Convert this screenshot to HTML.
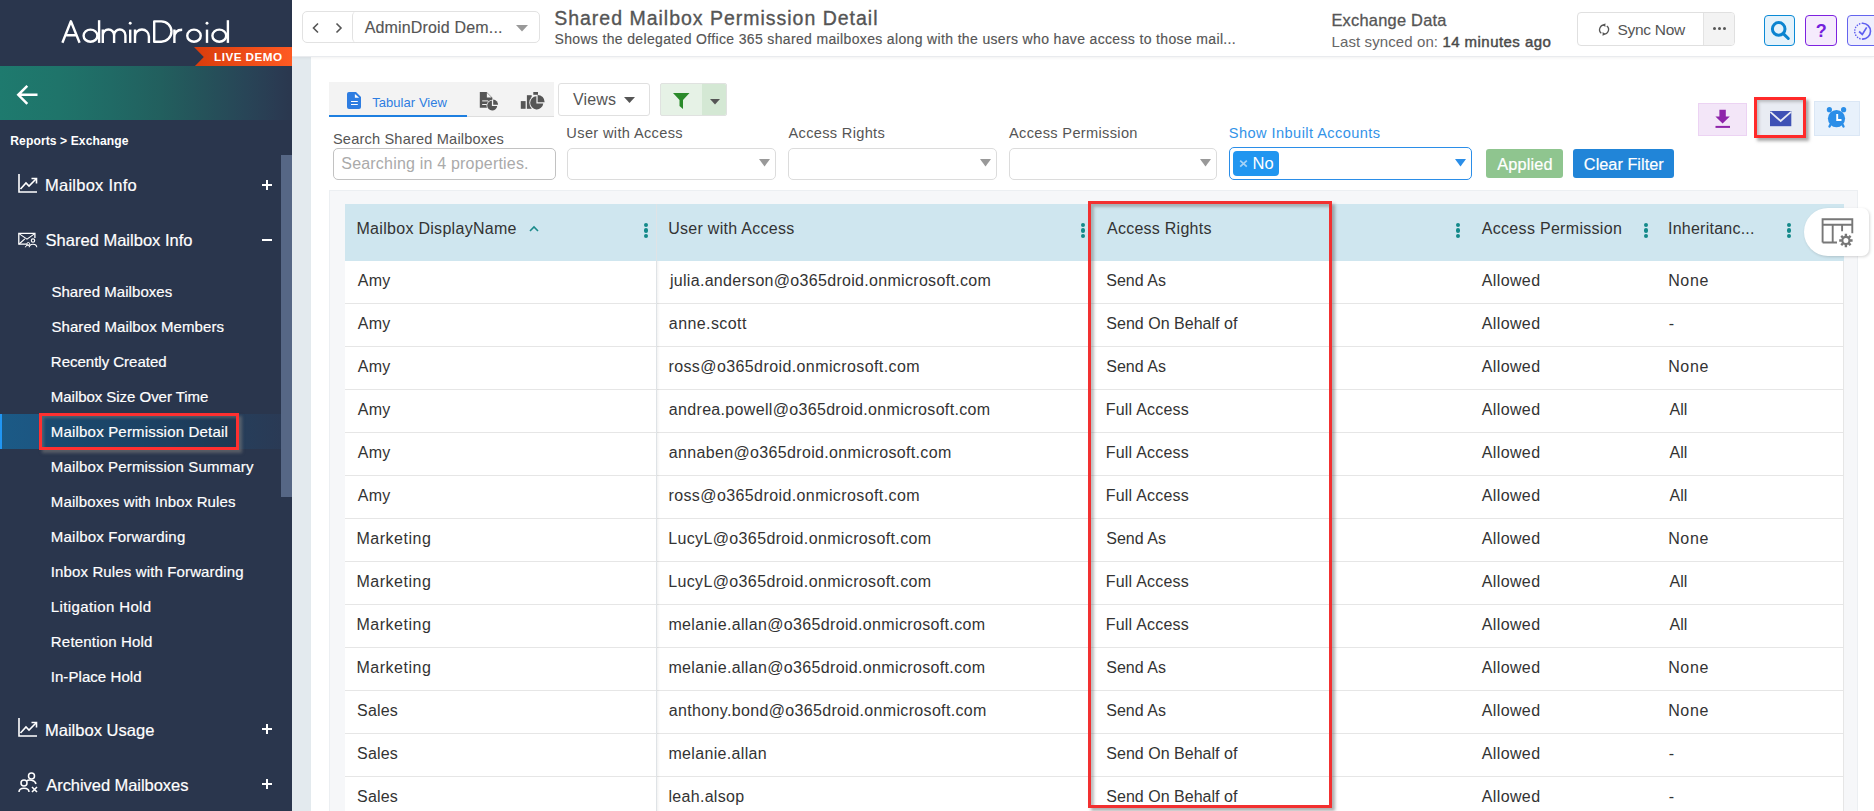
<!DOCTYPE html><html><head><meta charset="utf-8"><style>
html,body{margin:0;padding:0;width:1874px;height:811px;overflow:hidden;background:#fff;font-family:"Liberation Sans",sans-serif;}
.t{position:absolute;white-space:nowrap;}
.b{position:absolute;box-sizing:border-box;}
svg{position:absolute;overflow:visible;}
.sb{-webkit-text-stroke:0.25px #fff;}
</style></head><body>
<div class="b" style="left:0px;top:0px;width:292px;height:811px;background:#2a364d"></div>
<svg style="left:0;top:0" width="292" height="60" viewBox="0 0 292 60"><g fill="none" stroke="#fff" stroke-width="2.4" stroke-linejoin="round">
<path d="M62.4 42.8L70.9 21.3L79.6 42.8M65.6 35.2H76.4"/>
<ellipse cx="90.5" cy="35.7" rx="6.9" ry="6.1"/><path d="M99.1 20.2V42.9"/>
<path d="M102.8 42.9V29.6M102.8 35.2A5.65 5.65 0 0 1 114.1 35.2V42.9M114.1 35.2A5.65 5.65 0 0 1 125.4 35.2V42.9"/>
<path d="M130.2 29.6V42.9"/>
<path d="M135 42.9V29.6M135 36.4A6.95 6.95 0 0 1 148.9 36.4V42.9"/>
<path d="M154.2 21.4H161.3A10.2 10.15 0 0 1 161.3 41.7H154.2Z"/>
<path d="M174.4 42.9V29.6M174.4 37.5C174.4 32.5 177 29.7 182.2 29.7"/>
<ellipse cx="194" cy="35.7" rx="6.75" ry="6.1"/>
<path d="M207 29.6V42.9"/>
<ellipse cx="219.3" cy="35.7" rx="6.9" ry="6.1"/><path d="M227.9 20.2V42.9"/>
</g><circle cx="130.2" cy="23.3" r="1.45" fill="#fff"/><circle cx="207" cy="23.3" r="1.45" fill="#fff"/></svg>
<svg style="left:194px;top:47px" width="98" height="20" viewBox="0 0 98 20"><defs><linearGradient id="rg" x1="0" x2="1"><stop offset="0" stop-color="#d93c0c"/><stop offset="1" stop-color="#ff5a22"/></linearGradient></defs><path d="M0 0H98V20H0L9.8 10Z" fill="url(#rg)"/></svg>
<div class="t" style="left:214.12px;top:50.90px;font-size:11.7px;line-height:11.7px;color:#fff;font-weight:700;letter-spacing:0.452px;">LIVE DEMO</div>
<div class="b" style="left:0px;top:66px;width:292px;height:54px;background:linear-gradient(90deg,#1e7a6e 0%,#1f746a 20%,#206a65 38%,#225f5e 55%,#25525a 70%,#284557 84%,#2a3b52 95%,#2a374e 100%)"></div>
<svg style="left:16px;top:84px" width="22" height="22" viewBox="0 0 22 22"><path d="M21.5 10.8H3.5M11.3 1.8L2.3 10.8L11.3 19.8" fill="none" stroke="#fff" stroke-width="2.5"/></svg>
<div class="t" style="left:10.29px;top:134.56px;font-size:12.1px;line-height:12.1px;color:#fff;font-weight:700;letter-spacing:0.091px;">Reports &gt; Exchange</div>
<div class="b" style="left:281px;top:155px;width:11px;height:342px;background:#566785"></div>
<div class="t" style="left:44.95px;top:176.83px;font-size:16.5px;line-height:16.5px;color:#fff;font-weight:400;letter-spacing:0.262px;-webkit-text-stroke:0.2px #fff;">Mailbox Info</div>
<svg style="left:18px;top:174px" width="20" height="19" viewBox="0 0 20 19"><path d="M1 0V18H19" fill="none" stroke="#fff" stroke-width="1.6"/><path d="M2.5 15L8 9L11 12L18 5" fill="none" stroke="#fff" stroke-width="1.6"/><path d="M13.5 4.5H18.5V9.5" fill="none" stroke="#fff" stroke-width="1.6"/></svg>
<div class="b" style="left:262px;top:184.0px;width:10px;height:1.8000000000000114px;background:#fff"></div>
<div class="b" style="left:266.1px;top:180.0px;width:1.7999999999999545px;height:9.800000000000011px;background:#fff"></div>
<div class="t" style="left:45.55px;top:232.03px;font-size:16.5px;line-height:16.5px;color:#fff;font-weight:400;letter-spacing:0.011px;-webkit-text-stroke:0.2px #fff;">Shared Mailbox Info</div>
<svg style="left:18px;top:232px" width="20" height="17" viewBox="0 0 20 17"><path d="M16.9 6V1.3H0.8V12.2H9" fill="none" stroke="#fff" stroke-width="1.3"/><path d="M1 1.6L9 7.2L16.8 1.6M1.2 12L6.8 6.8" fill="none" stroke="#fff" stroke-width="1.1"/><circle cx="15" cy="8.6" r="1.7" fill="none" stroke="#fff" stroke-width="1.1"/><path d="M11.2 15.2C11.6 11.2 18.4 11.2 18.8 15.2" fill="none" stroke="#fff" stroke-width="1.1"/><circle cx="10.3" cy="11.8" r="1.3" fill="none" stroke="#fff" stroke-width="1"/><path d="M7.4 15.3C7.8 13 10 12.8 11.2 13.6" fill="none" stroke="#fff" stroke-width="1"/></svg>
<div class="b" style="left:262px;top:239.2px;width:10px;height:2.0px;background:#fff"></div>
<div class="t" style="left:44.95px;top:722.03px;font-size:16.5px;line-height:16.5px;color:#fff;font-weight:400;letter-spacing:0.029px;-webkit-text-stroke:0.2px #fff;">Mailbox Usage</div>
<svg style="left:18px;top:718px" width="20" height="19" viewBox="0 0 20 19"><path d="M1 0V18H19" fill="none" stroke="#fff" stroke-width="1.6"/><path d="M2.5 15L8 9L11 12L18 5" fill="none" stroke="#fff" stroke-width="1.6"/><path d="M13.5 4.5H18.5V9.5" fill="none" stroke="#fff" stroke-width="1.6"/></svg>
<div class="b" style="left:262px;top:728.2px;width:10px;height:1.7999999999999545px;background:#fff"></div>
<div class="b" style="left:266.1px;top:724.2px;width:1.7999999999999545px;height:9.799999999999955px;background:#fff"></div>
<div class="t" style="left:46.27px;top:777.33px;font-size:16.5px;line-height:16.5px;color:#fff;font-weight:400;letter-spacing:-0.055px;-webkit-text-stroke:0.2px #fff;">Archived Mailboxes</div>
<svg style="left:18px;top:772px" width="21" height="22" viewBox="0 0 21 22"><circle cx="13.5" cy="4" r="3" fill="none" stroke="#fff" stroke-width="1.5"/><circle cx="6" cy="11" r="3" fill="none" stroke="#fff" stroke-width="1.5"/><path d="M1 20C1 15 11 15 11 20" fill="none" stroke="#fff" stroke-width="1.5"/><path d="M9 9C10 7.5 17 7.5 18 12" fill="none" stroke="#fff" stroke-width="1.5"/><path d="M14 15L19 20M19 15L14 20" stroke="#fff" stroke-width="1.6"/></svg>
<div class="b" style="left:262px;top:783.3px;width:10px;height:1.7999999999999545px;background:#fff"></div>
<div class="b" style="left:266.1px;top:779.3px;width:1.7999999999999545px;height:9.799999999999955px;background:#fff"></div>
<div class="b" style="left:0px;top:414px;width:281px;height:35px;background:linear-gradient(90deg,#1b5a86 0%,#1d5580 20%,#1f4a70 55%,#253f5c 80%,#2a3a55 100%)"></div>
<div class="b" style="left:0px;top:414px;width:2px;height:35px;background:#2196f3"></div>
<div class="b" style="left:39px;top:413px;width:200px;height:37px;border:3px solid #ff3030;background:rgba(20,40,60,0.25);box-shadow:3px 3px 3px rgba(120,120,120,0.6), inset 2px 2px 3px rgba(120,120,120,0.55)"></div>
<div class="t" style="left:51.42px;top:283.90px;font-size:15px;line-height:15px;color:#fff;font-weight:400;letter-spacing:0.050px;-webkit-text-stroke:0.2px #fff;">Shared Mailboxes</div>
<div class="t" style="left:51.42px;top:318.90px;font-size:15px;line-height:15px;color:#fff;font-weight:400;letter-spacing:0.082px;-webkit-text-stroke:0.2px #fff;">Shared Mailbox Members</div>
<div class="t" style="left:50.87px;top:353.90px;font-size:15px;line-height:15px;color:#fff;font-weight:400;letter-spacing:-0.013px;-webkit-text-stroke:0.2px #fff;">Recently Created</div>
<div class="t" style="left:50.87px;top:388.90px;font-size:15px;line-height:15px;color:#fff;font-weight:400;letter-spacing:-0.043px;-webkit-text-stroke:0.2px #fff;">Mailbox Size Over Time</div>
<div class="t" style="left:50.87px;top:423.90px;font-size:15px;line-height:15px;color:#fff;font-weight:400;letter-spacing:0.182px;-webkit-text-stroke:0.2px #fff;">Mailbox Permission Detail</div>
<div class="t" style="left:50.87px;top:458.90px;font-size:15px;line-height:15px;color:#fff;font-weight:400;letter-spacing:0.167px;-webkit-text-stroke:0.2px #fff;">Mailbox Permission Summary</div>
<div class="t" style="left:50.87px;top:493.90px;font-size:15px;line-height:15px;color:#fff;font-weight:400;letter-spacing:0.113px;-webkit-text-stroke:0.2px #fff;">Mailboxes with Inbox Rules</div>
<div class="t" style="left:50.87px;top:528.90px;font-size:15px;line-height:15px;color:#fff;font-weight:400;letter-spacing:0.207px;-webkit-text-stroke:0.2px #fff;">Mailbox Forwarding</div>
<div class="t" style="left:50.72px;top:563.90px;font-size:15px;line-height:15px;color:#fff;font-weight:400;letter-spacing:0.135px;-webkit-text-stroke:0.2px #fff;">Inbox Rules with Forwarding</div>
<div class="t" style="left:50.87px;top:598.90px;font-size:15px;line-height:15px;color:#fff;font-weight:400;letter-spacing:0.374px;-webkit-text-stroke:0.2px #fff;">Litigation Hold</div>
<div class="t" style="left:50.87px;top:633.90px;font-size:15px;line-height:15px;color:#fff;font-weight:400;letter-spacing:0.182px;-webkit-text-stroke:0.2px #fff;">Retention Hold</div>
<div class="t" style="left:50.72px;top:668.90px;font-size:15px;line-height:15px;color:#fff;font-weight:400;letter-spacing:0.067px;-webkit-text-stroke:0.2px #fff;">In-Place Hold</div>
<div class="b" style="left:292px;top:57px;width:19px;height:754px;background:#e3eaee"></div>
<div class="b" style="left:292px;top:0px;width:1582px;height:57px;background:#fff;border-bottom:1px solid #e9ebee;box-shadow:0 1px 3px rgba(0,0,0,0.06)"></div>
<div class="b" style="left:302px;top:11px;width:238px;height:32px;border:1px solid #e2e2e2;border-radius:5px;background:#fff"></div>
<div class="b" style="left:352px;top:11px;width:188px;height:32px;border-left:1px solid #e2e2e2;border-radius:5px 0 0 5px"></div>
<svg style="left:312px;top:23px" width="8" height="10" viewBox="0 0 8 10"><path d="M6 0.5L1.5 5L6 9.5" fill="none" stroke="#555" stroke-width="1.6"/></svg>
<svg style="left:335px;top:23px" width="8" height="10" viewBox="0 0 8 10"><path d="M1.5 0.5L6 5L1.5 9.5" fill="none" stroke="#555" stroke-width="1.6"/></svg>
<div class="t" style="left:364.67px;top:20.46px;font-size:16px;line-height:16px;color:#555;font-weight:400;letter-spacing:0.165px;-webkit-text-stroke:0.15px #555;">AdminDroid Dem...</div>
<svg style="left:516px;top:24.7px" width="12" height="7" viewBox="0 0 12 7"><path d="M0 0H12L6 6.5Z" fill="#999"/></svg>
<div class="t" style="left:554.21px;top:9.29px;font-size:19.5px;line-height:19.5px;color:#555;font-weight:400;letter-spacing:0.989px;-webkit-text-stroke:0.35px #555;">Shared Mailbox Permission Detail</div>
<div class="t" style="left:554.46px;top:32.05px;font-size:14px;line-height:14px;color:#555;font-weight:400;letter-spacing:0.348px;-webkit-text-stroke:0.15px #555;">Shows the delegated Office 365 shared mailboxes along with the users who have access to those mail...</div>
<div class="t" style="left:1331.45px;top:11.82px;font-size:16.4px;line-height:16.4px;color:#555;font-weight:400;letter-spacing:0.242px;-webkit-text-stroke:0.3px #555;">Exchange Data</div>
<div class="t" style="left:1331.57px;top:33.80px;font-size:15px;line-height:15px;color:#666;font-weight:400;letter-spacing:0.100px;">Last synced on: <span style="color:#4a4a4a;letter-spacing:0.45px;-webkit-text-stroke:0.45px #4a4a4a">14 minutes ago</span></div>
<div class="b" style="left:1577px;top:12px;width:158px;height:34px;border:1px solid #e0e0e0;border-radius:4px;background:#fff"></div>
<div class="b" style="left:1703px;top:13px;width:31px;height:32px;background:#f3f3f3;border-left:1px solid #e3e3e3;border-radius:0 3px 3px 0"></div>
<svg style="left:1599px;top:22.8px" width="12" height="14" viewBox="0 0 12 14"><path d="M6 2.1A4.6 4.6 0 0 0 2.3 10.2M4 11A4.6 4.6 0 0 0 7.8 2.9" fill="none" stroke="#555" stroke-width="1.3"/><path d="M3.6 2.1L6.4 0.2V4Z" fill="#555"/><path d="M6.4 11L3.6 9.1V12.9Z" fill="#555"/></svg>
<div class="t" style="left:1617.50px;top:21.98px;font-size:15.5px;line-height:15.5px;color:#555;font-weight:400;letter-spacing:-0.301px;">Sync Now</div>
<div class="b" style="left:1713px;top:26.5px;width:3px;height:3px;border-radius:50%;background:#555"></div>
<div class="b" style="left:1718px;top:26.5px;width:3px;height:3px;border-radius:50%;background:#555"></div>
<div class="b" style="left:1723px;top:26.5px;width:3px;height:3px;border-radius:50%;background:#555"></div>
<div class="b" style="left:1764px;top:15px;width:31px;height:31px;border:1px solid #0a8ad6;border-radius:4px;background:#e4f2fb"></div>
<svg style="left:1770px;top:20px" width="22" height="22" viewBox="0 0 22 22"><circle cx="8.7" cy="8.9" r="6.3" fill="none" stroke="#0a84d0" stroke-width="3"/><path d="M13.8 14.1L18.3 18.5" stroke="#0a84d0" stroke-width="3" stroke-linecap="round"/></svg>
<div class="b" style="left:1805px;top:15px;width:32px;height:31px;border:1px solid #7d22e0;border-radius:4px;background:#f5ebfc"></div>
<div class="t" style="left:1815.67px;top:21.96px;font-size:18px;line-height:18px;color:#7420dc;font-weight:700;letter-spacing:0.000px;">?</div>
<div class="b" style="left:1847px;top:15px;width:33px;height:31px;border:1px solid #6464ee;border-radius:4px;background:#efeffd"></div>
<svg style="left:1853px;top:22px" width="20" height="20" viewBox="0 0 20 20"><path d="M9.6 1.3A7.9 7.9 0 0 1 9.6 17.1" fill="none" stroke="#5f5ff0" stroke-width="1.6"/><path d="M9.6 17.1A7.9 7.9 0 0 1 9.6 1.3" fill="none" stroke="#5f5ff0" stroke-width="1.6" stroke-dasharray="0.1 2.6" stroke-linecap="round"/><path d="M6.1 9.5L9.3 12.4L13.7 5.4" fill="none" stroke="#5f5ff0" stroke-width="1.7"/></svg>
<div class="b" style="left:329px;top:82px;width:225px;height:35px;background:#f3f3f3;border-bottom:1px solid #dedede"></div>
<div class="b" style="left:329px;top:114.5px;width:138px;height:2.5px;background:#1e7fe0"></div>
<svg style="left:347px;top:92px" width="14" height="17" viewBox="0 0 14 17"><path d="M2 0H9L14 5V15A2 2 0 0 1 12 17H2A2 2 0 0 1 0 15V2A2 2 0 0 1 2 0Z" fill="#2e7de1"/><path d="M7.9 1.9V5.8H12.2Z" fill="#fff"/><path d="M4 9.5H10.8M4 12.5H10.8" stroke="#fff" stroke-width="1.2"/></svg>
<div class="t" style="left:372.21px;top:95.80px;font-size:13px;line-height:13px;color:#2e7de1;font-weight:400;letter-spacing:0.054px;">Tabular View</div>
<svg style="left:479px;top:91px" width="22" height="22" viewBox="0 0 22 22"><path d="M0.8 1H7.6L13.4 6.8V16.7H0.8Z" fill="#555"/><path d="M7.9 1.8V6.5H12.6Z" fill="#f3f3f3"/><path d="M3.2 9.9H9.2M3.2 13.5H7.8" stroke="#f3f3f3" stroke-width="1"/><circle cx="13.4" cy="14.6" r="5.9" fill="#f3f3f3"/><path d="M12.9 9.6A5 5 0 1 0 18.2 15H12.9Z" fill="#555"/><path d="M14.2 8.6V13.7H19.1A5.1 5.1 0 0 0 14.2 8.6Z" fill="#555"/></svg>
<svg style="left:520px;top:91px" width="26" height="20" viewBox="0 0 26 20"><rect x="0.8" y="10.1" width="4.8" height="7.7" fill="#555"/><rect x="6.9" y="4.2" width="4.8" height="13.6" fill="#555"/><rect x="13.3" y="1" width="4.7" height="2.8" fill="#555"/><circle cx="17.1" cy="11.8" r="7.8" fill="#f3f3f3"/><path d="M16.4 5.2A6.6 6.6 0 1 0 23.3 12.6H16.4Z" fill="#555"/><path d="M17.6 3.9V11.3H24.6A7 7 0 0 0 17.6 3.9Z" fill="#555"/></svg>
<div class="b" style="left:558px;top:83px;width:92px;height:33px;border:1px solid #e0e0e0;border-radius:3px;background:#fff"></div>
<div class="t" style="left:572.93px;top:92.06px;font-size:16px;line-height:16px;color:#555;font-weight:400;letter-spacing:0.192px;">Views</div>
<svg style="left:623.5px;top:97.2px" width="11" height="6" viewBox="0 0 11 6"><path d="M0 0H11L5.5 6Z" fill="#555"/></svg>
<div class="b" style="left:660px;top:83px;width:67px;height:33px;border:1px solid #e0e2e0;border-radius:2px;background:#e6f2e6"></div>
<div class="b" style="left:702px;top:84px;width:24px;height:31px;background:#d4e8d4;border-radius:0 2px 2px 0"></div>
<svg style="left:673px;top:92.5px" width="17" height="16" viewBox="0 0 17 16"><path d="M0 0H16.5L10 7V16L6.5 13V7Z" fill="#2a8a2a"/></svg>
<svg style="left:710px;top:98.5px" width="10" height="6" viewBox="0 0 10 6"><path d="M0 0H10L5 5.5Z" fill="#555"/></svg>
<div class="t" style="left:332.94px;top:131.84px;font-size:14.6px;line-height:14.6px;color:#555;font-weight:400;letter-spacing:0.173px;">Search Shared Mailboxes</div>
<div class="b" style="left:333px;top:148px;width:223px;height:32px;border:1px solid #c2c2c2;border-radius:5px;background:#fff"></div>
<div class="t" style="left:341.27px;top:156.46px;font-size:16px;line-height:16px;color:#aaa;font-weight:400;letter-spacing:0.198px;">Searching in 4 properties.</div>
<div class="t" style="left:566.37px;top:126.04px;font-size:14.6px;line-height:14.6px;color:#555;font-weight:400;letter-spacing:0.346px;">User with Access</div>
<div class="b" style="left:567px;top:147.5px;width:209px;height:32.0px;border:1px solid #dcdcdc;border-radius:5px;background:#fff"></div>
<svg style="left:758.5px;top:159px" width="11" height="8" viewBox="0 0 11 8"><path d="M0 0H11L5.5 7.5Z" fill="#999"/></svg>
<div class="t" style="left:788.47px;top:126.04px;font-size:14.6px;line-height:14.6px;color:#555;font-weight:400;letter-spacing:0.322px;">Access Rights</div>
<div class="b" style="left:788px;top:147.5px;width:209px;height:32.0px;border:1px solid #dcdcdc;border-radius:5px;background:#fff"></div>
<svg style="left:979.5px;top:159px" width="11" height="8" viewBox="0 0 11 8"><path d="M0 0H11L5.5 7.5Z" fill="#999"/></svg>
<div class="t" style="left:1008.97px;top:126.04px;font-size:14.6px;line-height:14.6px;color:#555;font-weight:400;letter-spacing:0.328px;">Access Permission</div>
<div class="b" style="left:1008.5px;top:147.5px;width:208.5px;height:32.0px;border:1px solid #dcdcdc;border-radius:5px;background:#fff"></div>
<svg style="left:1199.5px;top:159px" width="11" height="8" viewBox="0 0 11 8"><path d="M0 0H11L5.5 7.5Z" fill="#999"/></svg>
<div class="t" style="left:1228.84px;top:126.04px;font-size:14.6px;line-height:14.6px;color:#3393e8;font-weight:400;letter-spacing:0.427px;">Show Inbuilt Accounts</div>
<div class="b" style="left:1229px;top:147px;width:243px;height:33px;border:1.5px solid #2b8ee8;border-radius:5px;background:#fff"></div>
<svg style="left:1454.5px;top:159px" width="11" height="8" viewBox="0 0 11 8"><path d="M0 0H11L5.5 7.5Z" fill="#2b8ee8"/></svg>
<div class="b" style="left:1233px;top:151px;width:46px;height:25px;background:#2196f0;border-radius:4px"></div>
<svg style="left:1239px;top:160px" width="10" height="8" viewBox="0 0 10 8"><path d="M1.2 0.6L7.8 6.6M7.8 0.6L1.2 6.6" stroke="#a6d3f7" stroke-width="1.7"/></svg>
<div class="t" style="left:1252.45px;top:154.83px;font-size:16.5px;line-height:16.5px;color:#fff;font-weight:400;letter-spacing:0.154px;">No</div>
<div class="b" style="left:1486px;top:149px;width:77px;height:29px;background:#8fc58f;border-radius:3px"></div>
<div class="t" style="left:1497.37px;top:156.40px;font-size:16.3px;line-height:16.3px;color:#fff;font-weight:400;letter-spacing:0.134px;-webkit-text-stroke:0.2px #fff;">Applied</div>
<div class="b" style="left:1573px;top:149px;width:101px;height:29px;background:#2185d8;border-radius:3px"></div>
<div class="t" style="left:1583.87px;top:156.40px;font-size:16.3px;line-height:16.3px;color:#fff;font-weight:400;letter-spacing:0.018px;-webkit-text-stroke:0.2px #fff;">Clear Filter</div>
<div class="b" style="left:1698px;top:103px;width:49px;height:33px;background:#f3e6f8;border:1px solid #ecd3f3"></div>
<svg style="left:1715px;top:109px" width="16" height="20" viewBox="0 0 16 20"><path d="M4.4 0.7H10.8V7.5H14.8L7.6 14.5L0.4 7.5H4.4Z" fill="#8e24aa"/><rect x="0.5" y="16.9" width="14.5" height="2" fill="#8e24aa"/></svg>
<div class="b" style="left:1754px;top:97px;width:52px;height:41px;border:3px solid #ff2a2a;background:#e9ecf3;box-shadow:3px 3px 3px rgba(100,100,100,0.55), inset 2px 2px 3px rgba(100,100,100,0.35)"></div>
<svg style="left:1769.7px;top:110.7px" width="22" height="16" viewBox="0 0 22 16"><path d="M0 0H21.3V15.2H0Z" fill="#3f51b5"/><path d="M0.3 0.8L10.65 10L21 0.8" fill="none" stroke="#e9ecf3" stroke-width="1.8"/></svg>
<div class="b" style="left:1814px;top:101px;width:46px;height:35px;background:#e8f1fb;border:1px solid #dbe7f5"></div>
<svg style="left:1826px;top:106px" width="22" height="23" viewBox="0 0 22 23"><circle cx="3.4" cy="3.7" r="2.6" fill="#2b8ee8"/><circle cx="17.6" cy="3.7" r="2.6" fill="#2b8ee8"/><circle cx="10.5" cy="12.6" r="8.6" fill="#2b8ee8"/><path d="M4.5 18.5L3.5 20.5M16.5 18.5L17.5 20.5" stroke="#2b8ee8" stroke-width="2.4" stroke-linecap="round"/><path d="M11.2 8V14H15.5" fill="none" stroke="#fff" stroke-width="1.9"/></svg>
<div class="b" style="left:329px;top:190px;width:1529px;height:621px;background:#f6f7f9;border:1px solid #eceff2;border-bottom:none"></div>
<div class="b" style="left:345px;top:204px;width:1499px;height:57px;background:#cfe6ef"></div>
<div class="t" style="left:356.49px;top:220.66px;font-size:16px;line-height:16px;color:#333;font-weight:400;letter-spacing:0.295px;">Mailbox DisplayName</div>
<div class="t" style="left:668.27px;top:220.66px;font-size:16px;line-height:16px;color:#333;font-weight:400;letter-spacing:0.274px;">User with Access</div>
<div class="t" style="left:1106.97px;top:220.66px;font-size:16px;line-height:16px;color:#333;font-weight:400;letter-spacing:0.254px;">Access Rights</div>
<div class="t" style="left:1481.77px;top:220.66px;font-size:16px;line-height:16px;color:#333;font-weight:400;letter-spacing:0.308px;">Access Permission</div>
<div class="t" style="left:1668.02px;top:220.66px;font-size:16px;line-height:16px;color:#333;font-weight:400;letter-spacing:0.236px;">Inheritanc...</div>
<svg style="left:529px;top:226px" width="10" height="6" viewBox="0 0 10 6"><path d="M1 5L5 1L9 5" fill="none" stroke="#1a8a8a" stroke-width="1.6"/></svg>
<div class="b" style="left:643.8px;top:222.9px;width:4.2px;height:4.2px;border-radius:50%;background:#138a8a"></div>
<div class="b" style="left:643.8px;top:228.4px;width:4.2px;height:4.2px;border-radius:50%;background:#138a8a"></div>
<div class="b" style="left:643.8px;top:233.9px;width:4.2px;height:4.2px;border-radius:50%;background:#138a8a"></div>
<div class="b" style="left:1081.1px;top:222.9px;width:4.2px;height:4.2px;border-radius:50%;background:#138a8a"></div>
<div class="b" style="left:1081.1px;top:228.4px;width:4.2px;height:4.2px;border-radius:50%;background:#138a8a"></div>
<div class="b" style="left:1081.1px;top:233.9px;width:4.2px;height:4.2px;border-radius:50%;background:#138a8a"></div>
<div class="b" style="left:1456.2px;top:222.9px;width:4.2px;height:4.2px;border-radius:50%;background:#138a8a"></div>
<div class="b" style="left:1456.2px;top:228.4px;width:4.2px;height:4.2px;border-radius:50%;background:#138a8a"></div>
<div class="b" style="left:1456.2px;top:233.9px;width:4.2px;height:4.2px;border-radius:50%;background:#138a8a"></div>
<div class="b" style="left:1643.7px;top:222.9px;width:4.2px;height:4.2px;border-radius:50%;background:#138a8a"></div>
<div class="b" style="left:1643.7px;top:228.4px;width:4.2px;height:4.2px;border-radius:50%;background:#138a8a"></div>
<div class="b" style="left:1643.7px;top:233.9px;width:4.2px;height:4.2px;border-radius:50%;background:#138a8a"></div>
<div class="b" style="left:1787.3px;top:222.9px;width:4.2px;height:4.2px;border-radius:50%;background:#138a8a"></div>
<div class="b" style="left:1787.3px;top:228.4px;width:4.2px;height:4.2px;border-radius:50%;background:#138a8a"></div>
<div class="b" style="left:1787.3px;top:233.9px;width:4.2px;height:4.2px;border-radius:50%;background:#138a8a"></div>
<div class="b" style="left:345px;top:261px;width:1499px;height:43px;background:#fff;border-bottom:1px solid #e6e6e6;border-right:1px solid #e6e6e6"></div>
<div class="t" style="left:357.77px;top:272.56px;font-size:16px;line-height:16px;color:#333;font-weight:400;letter-spacing:0.231px;">Amy</div>
<div class="t" style="left:669.89px;top:272.56px;font-size:16px;line-height:16px;color:#333;font-weight:400;letter-spacing:0.308px;">julia.anderson@o365droid.onmicrosoft.com</div>
<div class="t" style="left:1106.27px;top:272.56px;font-size:16px;line-height:16px;color:#333;font-weight:400;letter-spacing:0.003px;">Send As</div>
<div class="t" style="left:1481.77px;top:272.56px;font-size:16px;line-height:16px;color:#333;font-weight:400;letter-spacing:0.372px;">Allowed</div>
<div class="t" style="left:1668.19px;top:272.56px;font-size:16px;line-height:16px;color:#333;font-weight:400;letter-spacing:0.624px;">None</div>
<div class="b" style="left:345px;top:304px;width:1499px;height:43px;background:#fff;border-bottom:1px solid #e6e6e6;border-right:1px solid #e6e6e6"></div>
<div class="t" style="left:357.77px;top:315.56px;font-size:16px;line-height:16px;color:#333;font-weight:400;letter-spacing:0.231px;">Amy</div>
<div class="t" style="left:668.82px;top:315.56px;font-size:16px;line-height:16px;color:#333;font-weight:400;letter-spacing:0.419px;">anne.scott</div>
<div class="t" style="left:1106.27px;top:315.56px;font-size:16px;line-height:16px;color:#333;font-weight:400;letter-spacing:0.022px;">Send On Behalf of</div>
<div class="t" style="left:1481.77px;top:315.56px;font-size:16px;line-height:16px;color:#333;font-weight:400;letter-spacing:0.372px;">Allowed</div>
<div class="t" style="left:1668.79px;top:315.56px;font-size:16px;line-height:16px;color:#333;font-weight:400;letter-spacing:0.000px;">-</div>
<div class="b" style="left:345px;top:347px;width:1499px;height:43px;background:#fff;border-bottom:1px solid #e6e6e6;border-right:1px solid #e6e6e6"></div>
<div class="t" style="left:357.77px;top:358.56px;font-size:16px;line-height:16px;color:#333;font-weight:400;letter-spacing:0.231px;">Amy</div>
<div class="t" style="left:668.44px;top:358.56px;font-size:16px;line-height:16px;color:#333;font-weight:400;letter-spacing:0.402px;">ross@o365droid.onmicrosoft.com</div>
<div class="t" style="left:1106.27px;top:358.56px;font-size:16px;line-height:16px;color:#333;font-weight:400;letter-spacing:0.003px;">Send As</div>
<div class="t" style="left:1481.77px;top:358.56px;font-size:16px;line-height:16px;color:#333;font-weight:400;letter-spacing:0.372px;">Allowed</div>
<div class="t" style="left:1668.19px;top:358.56px;font-size:16px;line-height:16px;color:#333;font-weight:400;letter-spacing:0.624px;">None</div>
<div class="b" style="left:345px;top:390px;width:1499px;height:43px;background:#fff;border-bottom:1px solid #e6e6e6;border-right:1px solid #e6e6e6"></div>
<div class="t" style="left:357.77px;top:401.56px;font-size:16px;line-height:16px;color:#333;font-weight:400;letter-spacing:0.231px;">Amy</div>
<div class="t" style="left:668.82px;top:401.56px;font-size:16px;line-height:16px;color:#333;font-weight:400;letter-spacing:0.326px;">andrea.powell@o365droid.onmicrosoft.com</div>
<div class="t" style="left:1105.69px;top:401.56px;font-size:16px;line-height:16px;color:#333;font-weight:400;letter-spacing:0.219px;">Full Access</div>
<div class="t" style="left:1481.77px;top:401.56px;font-size:16px;line-height:16px;color:#333;font-weight:400;letter-spacing:0.372px;">Allowed</div>
<div class="t" style="left:1669.47px;top:401.56px;font-size:16px;line-height:16px;color:#333;font-weight:400;letter-spacing:0.000px;">All</div>
<div class="b" style="left:345px;top:433px;width:1499px;height:43px;background:#fff;border-bottom:1px solid #e6e6e6;border-right:1px solid #e6e6e6"></div>
<div class="t" style="left:357.77px;top:444.56px;font-size:16px;line-height:16px;color:#333;font-weight:400;letter-spacing:0.231px;">Amy</div>
<div class="t" style="left:668.82px;top:444.56px;font-size:16px;line-height:16px;color:#333;font-weight:400;letter-spacing:0.341px;">annaben@o365droid.onmicrosoft.com</div>
<div class="t" style="left:1105.69px;top:444.56px;font-size:16px;line-height:16px;color:#333;font-weight:400;letter-spacing:0.219px;">Full Access</div>
<div class="t" style="left:1481.77px;top:444.56px;font-size:16px;line-height:16px;color:#333;font-weight:400;letter-spacing:0.372px;">Allowed</div>
<div class="t" style="left:1669.47px;top:444.56px;font-size:16px;line-height:16px;color:#333;font-weight:400;letter-spacing:0.000px;">All</div>
<div class="b" style="left:345px;top:476px;width:1499px;height:43px;background:#fff;border-bottom:1px solid #e6e6e6;border-right:1px solid #e6e6e6"></div>
<div class="t" style="left:357.77px;top:487.56px;font-size:16px;line-height:16px;color:#333;font-weight:400;letter-spacing:0.231px;">Amy</div>
<div class="t" style="left:668.44px;top:487.56px;font-size:16px;line-height:16px;color:#333;font-weight:400;letter-spacing:0.402px;">ross@o365droid.onmicrosoft.com</div>
<div class="t" style="left:1105.69px;top:487.56px;font-size:16px;line-height:16px;color:#333;font-weight:400;letter-spacing:0.219px;">Full Access</div>
<div class="t" style="left:1481.77px;top:487.56px;font-size:16px;line-height:16px;color:#333;font-weight:400;letter-spacing:0.372px;">Allowed</div>
<div class="t" style="left:1669.47px;top:487.56px;font-size:16px;line-height:16px;color:#333;font-weight:400;letter-spacing:0.000px;">All</div>
<div class="b" style="left:345px;top:519px;width:1499px;height:43px;background:#fff;border-bottom:1px solid #e6e6e6;border-right:1px solid #e6e6e6"></div>
<div class="t" style="left:356.49px;top:530.56px;font-size:16px;line-height:16px;color:#333;font-weight:400;letter-spacing:0.512px;">Marketing</div>
<div class="t" style="left:668.19px;top:530.56px;font-size:16px;line-height:16px;color:#333;font-weight:400;letter-spacing:0.368px;">LucyL@o365droid.onmicrosoft.com</div>
<div class="t" style="left:1106.27px;top:530.56px;font-size:16px;line-height:16px;color:#333;font-weight:400;letter-spacing:0.003px;">Send As</div>
<div class="t" style="left:1481.77px;top:530.56px;font-size:16px;line-height:16px;color:#333;font-weight:400;letter-spacing:0.372px;">Allowed</div>
<div class="t" style="left:1668.19px;top:530.56px;font-size:16px;line-height:16px;color:#333;font-weight:400;letter-spacing:0.624px;">None</div>
<div class="b" style="left:345px;top:562px;width:1499px;height:43px;background:#fff;border-bottom:1px solid #e6e6e6;border-right:1px solid #e6e6e6"></div>
<div class="t" style="left:356.49px;top:573.56px;font-size:16px;line-height:16px;color:#333;font-weight:400;letter-spacing:0.512px;">Marketing</div>
<div class="t" style="left:668.19px;top:573.56px;font-size:16px;line-height:16px;color:#333;font-weight:400;letter-spacing:0.368px;">LucyL@o365droid.onmicrosoft.com</div>
<div class="t" style="left:1105.69px;top:573.56px;font-size:16px;line-height:16px;color:#333;font-weight:400;letter-spacing:0.219px;">Full Access</div>
<div class="t" style="left:1481.77px;top:573.56px;font-size:16px;line-height:16px;color:#333;font-weight:400;letter-spacing:0.372px;">Allowed</div>
<div class="t" style="left:1669.47px;top:573.56px;font-size:16px;line-height:16px;color:#333;font-weight:400;letter-spacing:0.000px;">All</div>
<div class="b" style="left:345px;top:605px;width:1499px;height:43px;background:#fff;border-bottom:1px solid #e6e6e6;border-right:1px solid #e6e6e6"></div>
<div class="t" style="left:356.49px;top:616.56px;font-size:16px;line-height:16px;color:#333;font-weight:400;letter-spacing:0.512px;">Marketing</div>
<div class="t" style="left:668.44px;top:616.56px;font-size:16px;line-height:16px;color:#333;font-weight:400;letter-spacing:0.345px;">melanie.allan@o365droid.onmicrosoft.com</div>
<div class="t" style="left:1105.69px;top:616.56px;font-size:16px;line-height:16px;color:#333;font-weight:400;letter-spacing:0.219px;">Full Access</div>
<div class="t" style="left:1481.77px;top:616.56px;font-size:16px;line-height:16px;color:#333;font-weight:400;letter-spacing:0.372px;">Allowed</div>
<div class="t" style="left:1669.47px;top:616.56px;font-size:16px;line-height:16px;color:#333;font-weight:400;letter-spacing:0.000px;">All</div>
<div class="b" style="left:345px;top:648px;width:1499px;height:43px;background:#fff;border-bottom:1px solid #e6e6e6;border-right:1px solid #e6e6e6"></div>
<div class="t" style="left:356.49px;top:659.56px;font-size:16px;line-height:16px;color:#333;font-weight:400;letter-spacing:0.512px;">Marketing</div>
<div class="t" style="left:668.44px;top:659.56px;font-size:16px;line-height:16px;color:#333;font-weight:400;letter-spacing:0.345px;">melanie.allan@o365droid.onmicrosoft.com</div>
<div class="t" style="left:1106.27px;top:659.56px;font-size:16px;line-height:16px;color:#333;font-weight:400;letter-spacing:0.003px;">Send As</div>
<div class="t" style="left:1481.77px;top:659.56px;font-size:16px;line-height:16px;color:#333;font-weight:400;letter-spacing:0.372px;">Allowed</div>
<div class="t" style="left:1668.19px;top:659.56px;font-size:16px;line-height:16px;color:#333;font-weight:400;letter-spacing:0.624px;">None</div>
<div class="b" style="left:345px;top:691px;width:1499px;height:43px;background:#fff;border-bottom:1px solid #e6e6e6;border-right:1px solid #e6e6e6"></div>
<div class="t" style="left:357.07px;top:702.56px;font-size:16px;line-height:16px;color:#333;font-weight:400;letter-spacing:0.195px;">Sales</div>
<div class="t" style="left:668.82px;top:702.56px;font-size:16px;line-height:16px;color:#333;font-weight:400;letter-spacing:0.339px;">anthony.bond@o365droid.onmicrosoft.com</div>
<div class="t" style="left:1106.27px;top:702.56px;font-size:16px;line-height:16px;color:#333;font-weight:400;letter-spacing:0.003px;">Send As</div>
<div class="t" style="left:1481.77px;top:702.56px;font-size:16px;line-height:16px;color:#333;font-weight:400;letter-spacing:0.372px;">Allowed</div>
<div class="t" style="left:1668.19px;top:702.56px;font-size:16px;line-height:16px;color:#333;font-weight:400;letter-spacing:0.624px;">None</div>
<div class="b" style="left:345px;top:734px;width:1499px;height:43px;background:#fff;border-bottom:1px solid #e6e6e6;border-right:1px solid #e6e6e6"></div>
<div class="t" style="left:357.07px;top:745.56px;font-size:16px;line-height:16px;color:#333;font-weight:400;letter-spacing:0.195px;">Sales</div>
<div class="t" style="left:668.44px;top:745.56px;font-size:16px;line-height:16px;color:#333;font-weight:400;letter-spacing:0.335px;">melanie.allan</div>
<div class="t" style="left:1106.27px;top:745.56px;font-size:16px;line-height:16px;color:#333;font-weight:400;letter-spacing:0.022px;">Send On Behalf of</div>
<div class="t" style="left:1481.77px;top:745.56px;font-size:16px;line-height:16px;color:#333;font-weight:400;letter-spacing:0.372px;">Allowed</div>
<div class="t" style="left:1668.79px;top:745.56px;font-size:16px;line-height:16px;color:#333;font-weight:400;letter-spacing:0.000px;">-</div>
<div class="b" style="left:345px;top:777px;width:1499px;height:43px;background:#fff;border-bottom:1px solid #e6e6e6;border-right:1px solid #e6e6e6"></div>
<div class="t" style="left:357.07px;top:788.56px;font-size:16px;line-height:16px;color:#333;font-weight:400;letter-spacing:0.195px;">Sales</div>
<div class="t" style="left:668.42px;top:788.56px;font-size:16px;line-height:16px;color:#333;font-weight:400;letter-spacing:0.312px;">leah.alsop</div>
<div class="t" style="left:1106.27px;top:788.56px;font-size:16px;line-height:16px;color:#333;font-weight:400;letter-spacing:0.022px;">Send On Behalf of</div>
<div class="t" style="left:1481.77px;top:788.56px;font-size:16px;line-height:16px;color:#333;font-weight:400;letter-spacing:0.372px;">Allowed</div>
<div class="t" style="left:1668.79px;top:788.56px;font-size:16px;line-height:16px;color:#333;font-weight:400;letter-spacing:0.000px;">-</div>
<div class="b" style="left:656px;top:204px;width:1px;height:607px;background:#dfe3e6"></div>
<div class="b" style="left:657px;top:261px;width:3px;height:550px;background:linear-gradient(90deg,rgba(0,0,0,0.05),rgba(0,0,0,0))"></div>
<div class="b" style="left:1088px;top:201px;width:244px;height:607px;border:3px solid #f23030;box-shadow:3px 3px 3px rgba(110,110,110,0.55), inset 3px 3px 3px rgba(110,110,110,0.45)"></div>
<div class="b" style="left:1804px;top:208px;width:64.5px;height:48px;background:#fff;border-radius:24px 7px 7px 24px;box-shadow:1px 1px 3px rgba(0,0,0,0.16)"></div>
<svg style="left:1821px;top:218px" width="34" height="32" viewBox="0 0 34 32"><path d="M1.6 24.5V1.2H31.3V15.3M1.6 6.8H31.3M11.7 6.8V24.5M1.6 24.5H16M21.1 6.8V13.3" fill="none" stroke="#777" stroke-width="1.9"/><circle cx="24.9" cy="22.5" r="3.6" fill="none" stroke="#777" stroke-width="2.2"/><g stroke="#777" stroke-width="2.4"><path d="M24.9 15.8V18.4M24.9 26.6V29.2M18.2 22.5H20.8M29 22.5H31.6M20.2 17.8L22 19.6M27.8 25.4L29.6 27.2M20.2 27.2L22 25.4M27.8 19.6L29.6 17.8"/></g></svg>
</body></html>
